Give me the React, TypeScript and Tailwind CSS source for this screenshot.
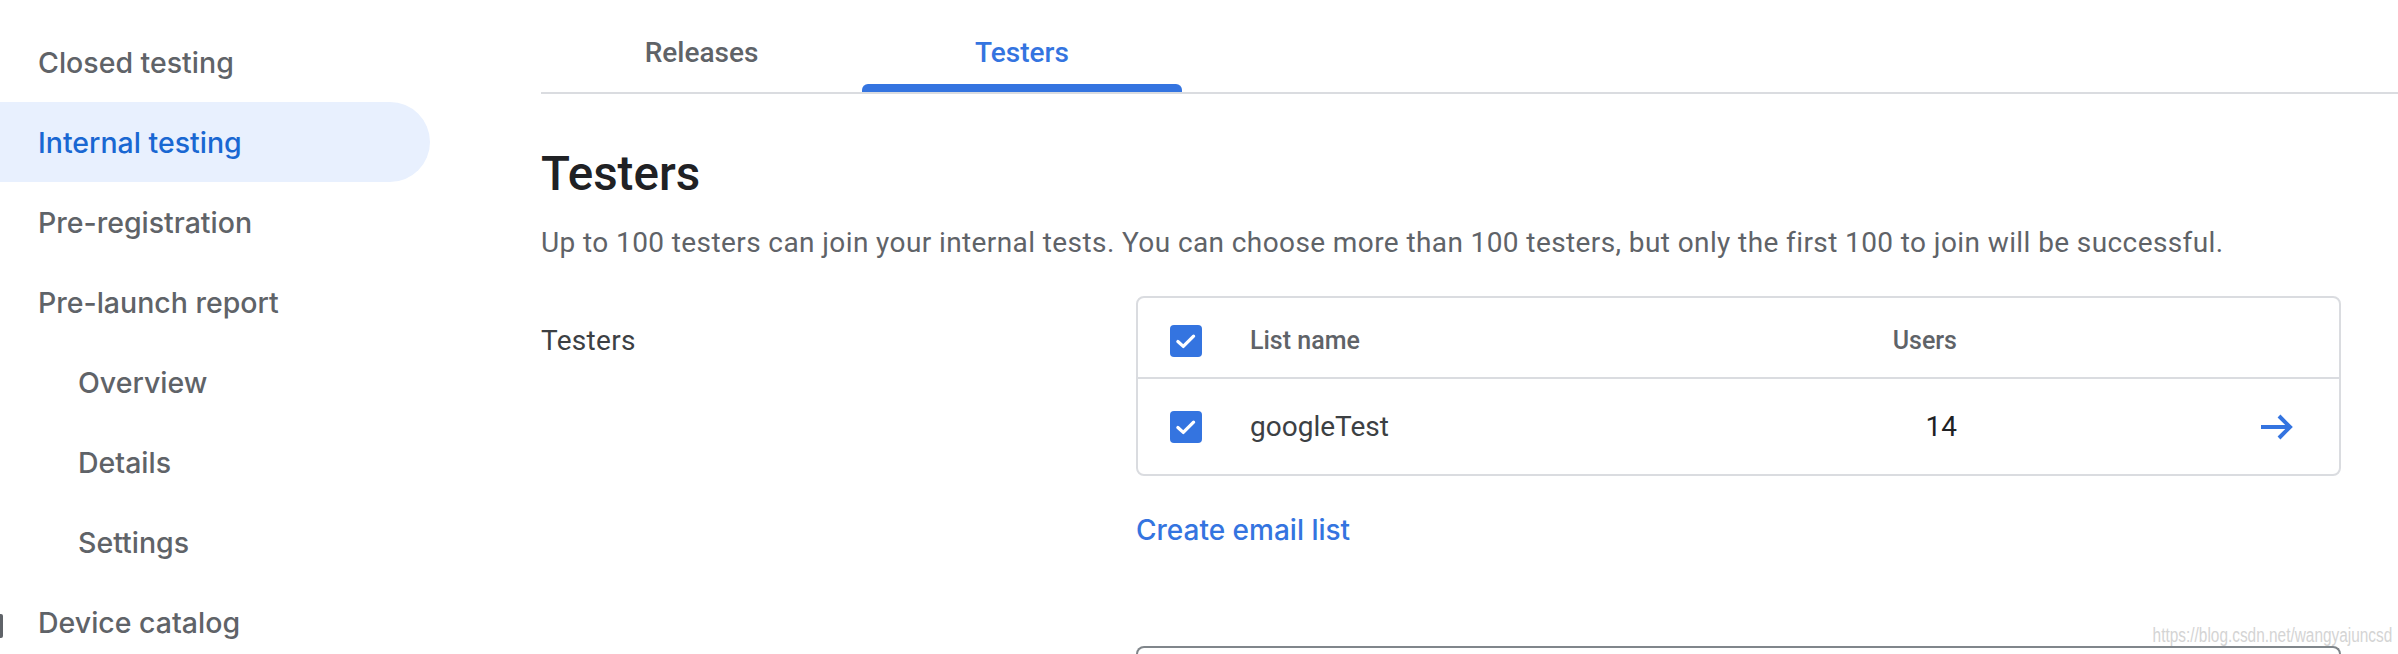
import React from "react";

const BLUE = "#3474e0";

function Check() {
  return (
    <div className="w-[32px] h-[32px] rounded-[4px] bg-[#3474e0] flex items-center justify-center shrink-0">
      <svg width="26" height="26" viewBox="0 0 24 24" fill="none">
        <polyline points="4.5,12.5 9.5,17 19,7.5" stroke="#ffffff" strokeWidth="3" strokeLinecap="round" strokeLinejoin="round" />
      </svg>
    </div>
  );
}

function Arrow() {
  return (
    <svg width="34" height="26" viewBox="0 0 34 26" fill="none" className="shrink-0">
      <line x1="1" y1="13" x2="30" y2="13" stroke={BLUE} strokeWidth="4" />
      <polyline points="19,2 30,13 19,24" stroke={BLUE} strokeWidth="4" fill="none" />
    </svg>
  );
}

const navItems: { label: string; sub?: boolean; active?: boolean; mark?: boolean }[] = [
  { label: "Closed testing" },
  { label: "Internal testing", active: true },
  { label: "Pre-registration" },
  { label: "Pre-launch report" },
  { label: "Overview", sub: true },
  { label: "Details", sub: true },
  { label: "Settings", sub: true },
  { label: "Device catalog", mark: true },
];

export default function App() {
  return (
    <div className="w-[2398px] h-[654px] overflow-hidden bg-white flex relative" style={{ fontFamily: "Roboto, 'Liberation Sans', sans-serif" }}>
      {/* Sidebar */}
      <div className="w-[541px] shrink-0 pt-[22px] flex flex-col">
        {navItems.map((it) => (
          <div
            key={it.label}
            className={
              "w-[430px] h-[80px] flex items-center shrink-0 text-[28.5px] font-medium pt-[3px] " +
              (it.active ? "bg-[#e8f0fe] rounded-r-full text-[#1967d2] " : "text-[#5f6368] ") +
              (it.sub ? "pl-[78px]" : it.mark ? "" : "pl-[38px]")
            }
            style={{ fontFamily: "Inter, 'Open Sans', sans-serif" }}
          >
            {it.mark && <div className="w-[3px] h-[24px] bg-[#5f6368] rounded-r-[2px] mr-[35px] mt-[4px]" />}
            <span>{it.label}</span>
          </div>
        ))}
      </div>

      {/* Main */}
      <div className="flex-1 flex flex-col">
        <div className="flex h-[94px] border-b-2 border-[#dadce0] shrink-0">
          <div className="w-[321px] h-full flex items-center justify-center pt-[14px] text-[28px] font-medium text-[#5f6368]">
            Releases
          </div>
          <div className="w-[320px] h-full relative flex items-center justify-center pt-[14px] text-[28px] font-medium text-[#3474e0]">
            Testers
            <div className="absolute left-0 right-0 bottom-0 h-[8px] rounded-t-[6px] bg-[#3474e0]" />
          </div>
        </div>

        <div className="pr-[57px] flex flex-col">
          <h1 className="mt-[52px] text-[47.5px] leading-[56px] font-medium text-[#202124]">Testers</h1>
          <p className="mt-[23px] text-[28px] leading-[36px] tracking-[0.4px] text-[#5f6368]">
            Up to 100 testers can join your internal tests. You can choose more than 100 testers, but only the first 100 to join will be successful.
          </p>

          <div className="flex mt-[35px]">
            <div className="w-[595px] shrink-0 pt-[29px] text-[28px] leading-[32px] tracking-[0.3px] text-[#3c4043]">Testers</div>
            <div className="flex-1 border-2 border-[#dadce0] rounded-[8px]">
              <div className="flex items-center pl-[32px] pt-[27px] pb-[20px] border-b-2 border-[#dadce0]">
                <Check />
                <div className="ml-[48px] flex-1 text-[25px] leading-[32px] font-medium text-[#5f6368]">List name</div>
                <div className="w-[200px] text-right text-[25px] leading-[32px] font-medium text-[#5f6368]">Users</div>
                <div className="w-[382px]" />
              </div>
              <div className="flex items-center pl-[32px] pt-[32px] pb-[31px]">
                <Check />
                <div className="ml-[48px] flex-1 text-[28px] leading-[32px] text-[#3c4043]">googleTest</div>
                <div className="w-[200px] text-right text-[28px] leading-[32px] text-[#202124]">14</div>
                <div className="w-[303px]" />
                <Arrow />
                <div className="w-[45px]" />
              </div>
            </div>
          </div>

          <div
            className="mt-[36px] ml-[595px] text-[28px] leading-[36px] font-medium text-[#3474e0]"
            style={{ fontFamily: "Inter, 'Open Sans', sans-serif" }}
          >
            Create email list
          </div>
          <div className="mt-[98px] ml-[595px] h-[40px] border-2 border-b-0 border-[#80868b] rounded-t-[8px]" />
        </div>
      </div>

      <div
        className="absolute right-[6px] top-[624px] text-[20px] leading-[22px] text-[#d4d4d4] scale-x-[0.77] origin-right whitespace-nowrap"
        style={{ fontFamily: "'Liberation Sans', Arial, sans-serif" }}
      >
        https://blog.csdn.net/wangyajuncsd
      </div>
    </div>
  );
}
